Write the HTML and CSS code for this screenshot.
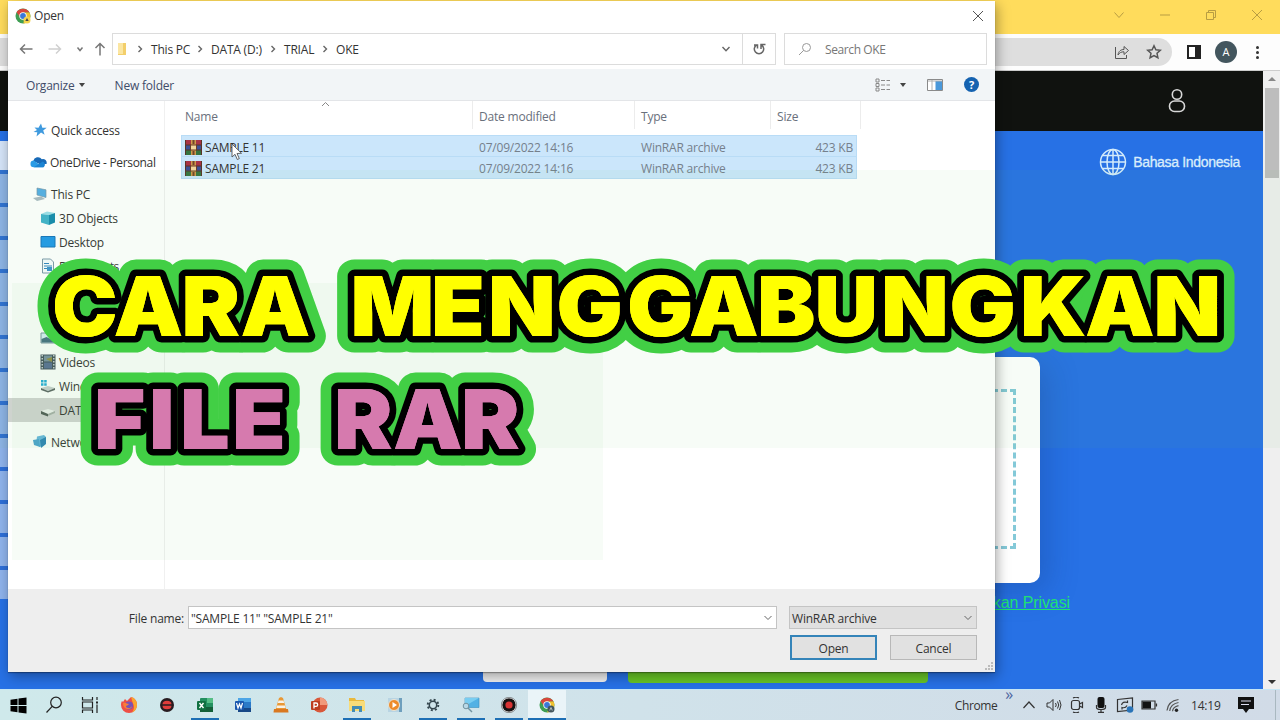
FILE: index.html
```html
<!DOCTYPE html>
<html lang="id">
<head>
  <meta charset="UTF-8">
  <meta name="viewport" content="width=device-width, initial-scale=1.0">
  <title>Cara Menggabungkan File RAR</title>
  <link rel="stylesheet" href="styles.css">
</head>
<body>
  <div class="desktop">
    <!-- browser window -->
    <div class="browser">
      <div class="tabBar">
        <svg width="14" height="14" viewBox="0 0 14 14"><path d="M2.500 4.500l4.500 5 4.500-5"/></svg>
        <svg width="14" height="14" viewBox="0 0 14 14"><path d="M2 7h10"/></svg>
        <svg width="14" height="14" viewBox="0 0 14 14"><path d="M2.500 4.500h7v7h-7zM4.500 4.500v-2h7v7h-2"/></svg>
        <svg width="14" height="14" viewBox="0 0 14 14"><path d="M2 2l10 10M12 2L2 12"/></svg>
      </div>
      <div class="toolBar">
        <div class="urlBar">
          <svg width="16" height="16" viewBox="0 0 16 16"><path d="M1.500 3v11.500h11V11M4 11c.5-4 3-5.500 6-5.500V2.500l4.500 4-4.500 4v-2.700c-3 0-4.500 1-6 3.200z"/></svg>
          <svg width="16" height="16" viewBox="0 0 16 16"><path stroke-width="1.500" d="M8 1.800l1.900 4 4.400.5-3.300 3 .9 4.400L8 11.500l-3.900 2.200.9-4.400-3.300-3 4.400-.5z"/></svg>
        </div>
        <svg class="panelIcon" width="16" height="16" viewBox="0 0 16 16"><path fill="#222" d="M1 1h14v14H1zM3 3v10h6V3z" fill-rule="evenodd"/></svg>
        <div class="avatar">A</div>
        <div class="dots"><i></i><i></i><i></i></div>
      </div>
      <div class="view">
        <div class="page">
          <div class="siteHeader">
            <svg width="20" height="26" viewBox="0 0 20 26"><circle cx="10" cy="6.500" r="4.700"/><rect x="2.500" y="13" width="15" height="10.500" rx="5"/></svg>
          </div>
          <div class="siteBody">
            <div class="language">
              <svg width="28" height="28" viewBox="0 0 28 28"><circle cx="14" cy="14" r="12.500"/><ellipse cx="14" cy="14" rx="6" ry="12.500"/><path d="M14 1.500v25M1.500 14h25M3.500 7.500h21M3.500 20.500h21"/></svg>
              <span>Bahasa Indonesia</span>
            </div>
            <div class="adStrip"></div>
            <div class="uploadCard"><div class="dropZone"></div></div>
            <div class="privacy">Kebijakan Privasi</div>
            <div class="whiteButton"></div>
            <div class="greenButton"></div>
          </div>
        </div>
        <div class="scrollBar">
          <span class="arrowUp"></span>
          <span class="thumb"></span>
          <span class="arrowDown"></span>
        </div>
      </div>
    </div>

    <!-- open file dialog -->
    <div class="dialog">
      <div class="dialogTitle">
        <svg width="16" height="16" viewBox="0 0 16 16"><circle cx="8" cy="8" r="7.500" fill="#3f9e53"/><path fill="#d9463c" d="M1.500 4.300A7.500 7.500 0 0 1 14.500 4.500H8L5 9z"/><path fill="#f2c12e" d="M14.500 4.500A7.500 7.500 0 0 1 8 15.500l3-6-1-5z"/><circle cx="8" cy="8" r="3.700" fill="#fff"/><circle cx="8" cy="8" r="2.900" fill="#3b78d8"/><circle cx="12" cy="12" r="3.500" fill="#f5d44e"/><path d="M12 10l1.700 3h-3.400z" fill="#444"/></svg>
        <span>Open</span>
        <svg class="closeIcon" width="12" height="12" viewBox="0 0 12 12"><path d="M1 1l10 10M11 1L1 11"/></svg>
      </div>
      <div class="addressRow">
        <div class="navButtons">
          <svg width="14" height="14" viewBox="0 0 14 14"><path d="M13.500 7H1.500M6 2.500L1.500 7 6 11.500"/></svg>
          <svg class="faded" width="14" height="14" viewBox="0 0 14 14"><path d="M.5 7h12M8 2.500L12.500 7 8 11.500"/></svg>
          <svg width="8" height="8" viewBox="0 0 8 8"><path d="M1.500 2.500L4 5.500l2.500-3"/></svg>
          <svg width="14" height="14" viewBox="0 0 14 14"><path d="M7 13.500V1.500M2.500 6L7 1.500 11.500 6"/></svg>
        </div>
        <div class="address">
          <svg class="folder" width="11" height="14" viewBox="0 0 11 14"><path fill="#f3cf6b" d="M2 1h7v12H1V9h1z"/><path fill="#fbe6a2" d="M1 1h5v11H1z"/></svg>
          <svg class="chev" width="6" height="8" viewBox="0 0 6 8"><path d="M1.500 1l3 3-3 3"/></svg>
          <span class="crumb crumbPc">This PC</span>
          <svg class="chev" width="6" height="8" viewBox="0 0 6 8"><path d="M1.500 1l3 3-3 3"/></svg>
          <span class="crumb crumbData">DATA (D:)</span>
          <svg class="chev" width="6" height="8" viewBox="0 0 6 8"><path d="M1.500 1l3 3-3 3"/></svg>
          <span class="crumb crumbTrial">TRIAL</span>
          <svg class="chev" width="6" height="8" viewBox="0 0 6 8"><path d="M1.500 1l3 3-3 3"/></svg>
          <span class="crumb">OKE</span>
          <svg class="chev dropChev" width="10" height="8" viewBox="0 0 10 8"><path d="M1.500 2L5 5.800 8.500 2"/></svg>
        </div>
        <div class="refresh">
          <svg width="14" height="14" viewBox="0 0 14 14"><path d="M4.500 3A4.700 4.700 0 1 0 9.500 3M9 7V2.500H13.500M2 3h3.500v3.500"/></svg>
        </div>
        <div class="search">
          <svg width="14" height="14" viewBox="0 0 14 14"><circle cx="8.500" cy="5.500" r="4"/><path d="M5.700 8.300L1 13"/></svg>
          <span>Search OKE</span>
        </div>
      </div>
      <div class="commandBar">
        <span class="organize">Organize</span><b class="caret"></b>
        <span class="newFolder">New folder</span>
        <div class="viewTools">
          <svg width="16" height="14" viewBox="0 0 16 14"><path fill="none" stroke="#888" d="M1 1h3v3H1zM1 5.500h3v3H1zM1 10h3v3H1z"/><path stroke="#888" stroke-dasharray="4 1.500" d="M6 2.500h9M6 7h9M6 11.500h9"/></svg>
          <b class="caret"></b>
          <svg class="preview" width="16" height="12" viewBox="0 0 16 12"><path fill="#fff" stroke="#8a8a8a" d="M.5.500h15v11H.5z"/><path fill="#4a98da" d="M8.500 2H15v9H8.500z"/><path stroke="#b0b0b0" d="M5 1v10M1 2h14"/></svg>
          <div class="help">?</div>
        </div>
      </div>
      <div class="content">
        <div class="sideBar">
          <div class="place">
            <svg width="16" height="16" viewBox="0 0 16 16"><path fill="#3f9ade" d="M9 1.500l1.300 4.200 4.400.1-3.500 2.700 1.400 4.300L9 10.500l-4.500 4 .8-4.200-3.800-.3 3.500-2L2.500 5.500l4 .2z"/></svg>
            <span>Quick access</span>
          </div>
          <div class="place top cloud">
            <svg width="17" height="14" viewBox="0 0 18 14"><path fill="#1769b7" d="M3.500 6A5 5 0 0 1 12.500 4 4 4 0 0 1 17.500 9L10 9z"/><path fill="#2a9be5" d="M4 12.500A3.500 3.500 0 0 1 4 5.500L14 12.500z"/><path fill="#1b83d2" d="M4 12.500l9.500-6A3.500 3.500 0 0 1 14.500 12.500z"/></svg>
            <span>OneDrive - Personal</span>
          </div>
          <div class="place top">
            <svg width="16" height="16" viewBox="0 0 16 16"><path fill="#54aee6" stroke="#7897ab" stroke-width=".7" d="M5 2l9 1.800v7.700L5 9z"/><path fill="#aabac3" d="M1 12l8-1.500 4 2.500-8 2z"/></svg>
            <span>This PC</span>
          </div>
          <div class="place sub">
            <svg width="16" height="16" viewBox="0 0 16 16"><path fill="#9ddfeb" d="M1 4l6-2.500L15 3 9 5z"/><path fill="#41b2cc" d="M1 4l8 1v10l-8-2.500z"/><path fill="#168aae" d="M9 5l6-2v9.500L9 15z"/></svg>
            <span>3D Objects</span>
          </div>
          <div class="place sub">
            <svg width="16" height="16" viewBox="0 0 16 16"><path fill="#2199e8" stroke="#1674bd" d="M1 2.500h14v10.500H1z"/></svg>
            <span>Desktop</span>
          </div>
          <div class="place sub">
            <svg width="16" height="16" viewBox="0 0 16 16"><path fill="#f7fbfd" stroke="#7d99aa" d="M2.500 1h8l3 3v11h-11z"/><path stroke="#3385bf" d="M4 5.500h5M4 8h8M4 10.500h3"/><path fill="#3e93cc" d="M7 9h5v4H7z"/></svg>
            <span class="docs">Documents</span>
          </div>
          <div class="place sub"></div>
          <div class="place sub"></div>
          <div class="place sub">
            <svg width="16" height="16" viewBox="0 0 16 16"><path fill="#d9edf7" stroke="#7d95a0" d="M1 3h14v10H1z"/><path fill="#446f80" d="M1.500 9l5-2 8 4v1.500h-13z"/></svg>
          </div>
          <div class="place sub">
            <svg width="16" height="16" viewBox="0 0 16 16"><path fill="#43515c" d="M.5.500h15v15H.5z"/><path fill="#7990a0" d="M4 1.500h8v6H4z"/><path fill="#576f95" d="M4 8.500h8v6H4z"/><path fill="#938e48" d="M6 5l6-2v5z"/><path stroke="#dce3e6" stroke-width="1.300" stroke-dasharray="1.500 1.500" d="M2.200 1v14M13.800 1v14"/></svg>
            <span>Videos</span>
          </div>
          <div class="place sub">
            <svg width="16" height="16" viewBox="0 0 16 16"><path fill="#c9d0d0" d="M1 10l7-2 7 2-7 3z"/><path fill="#5c6464" d="M1 10l7 3 7-3v2l-7 2.500L1 12z"/><path fill="#22acd8" d="M1 2h2.500v2.500H1zM4.200 2h2.500v2.500H4.200zM1 5.200h2.500v2.500H1zM4.200 5.200h2.500v2.500H4.200z"/></svg>
            <span>Windows</span>
          </div>
          <div class="place sub selected">
            <svg width="16" height="16" viewBox="0 0 16 16"><path fill="#eef0ee" d="M1 9l7-2 7 2-7 3z"/><path fill="#515b56" d="M1 9l7 3v2.500L1 12z"/><path fill="#a8afaa" d="M8 12l7-3v2l-7 3z"/></svg>
            <span>DATA (D:)</span>
          </div>
          <div class="place top">
            <svg width="16" height="16" viewBox="0 0 16 16"><path fill="#67b7df" d="M5 2.500l7-1.500 2 2-1 7-5 3-4-3z"/><path fill="#2c83b6" d="M8 6l6-3v7l-5 4z"/><path fill="#4ca3d1" d="M1 6l6-1 1 8-6-2z"/></svg>
            <span>Network</span>
          </div>
        </div>
        <div class="files">
          <div class="fileHead">
            <span>Name</span><span>Date modified</span><span>Type</span><span>Size</span>
            <svg class="sortMark" width="9" height="6" viewBox="0 0 9 6"><path d="M1 5l3.500-3.500L8 5"/></svg>
          </div>
          <div class="fileRow">
            <span class="fileName"><svg width="17" height="15" viewBox="0 0 17 15"><path fill="#a83245" d="M0 0h17v5H0z"/><path fill="#3d4f95" d="M0 5h17v5H0z"/><path fill="#357440" d="M0 10h17v5H0z"/><path fill="#5b3326" d="M0 4.500h17v1H0zM0 9.500h17v1H0zM0 0h1v15H0zM16 0h1v15h-1z"/><path fill="#d19a4a" d="M6 0h5v15H6z"/><path fill="#70452c" d="M7.500 0h2v4h-2zM7.500 11h2v4h-2z"/><path fill="#f1d59b" stroke="#6b3c28" d="M5.500 5h6v5h-6z"/></svg>SAMPLE 11</span>
            <span>07/09/2022 14:16</span><span>WinRAR archive</span><span class="size">423 KB</span>
          </div>
          <div class="fileRow">
            <span class="fileName"><svg width="17" height="15" viewBox="0 0 17 15"><path fill="#a83245" d="M0 0h17v5H0z"/><path fill="#3d4f95" d="M0 5h17v5H0z"/><path fill="#357440" d="M0 10h17v5H0z"/><path fill="#5b3326" d="M0 4.500h17v1H0zM0 9.500h17v1H0zM0 0h1v15H0zM16 0h1v15h-1z"/><path fill="#d19a4a" d="M6 0h5v15H6z"/><path fill="#70452c" d="M7.500 0h2v4h-2zM7.500 11h2v4h-2z"/><path fill="#f1d59b" stroke="#6b3c28" d="M5.500 5h6v5h-6z"/></svg>SAMPLE 21</span>
            <span>07/09/2022 14:16</span><span>WinRAR archive</span><span class="size">423 KB</span>
          </div>
        </div>
      </div>
      <div class="footer">
        <div class="nameRow">
          <label>File name:</label>
          <div class="nameInput"><span>"SAMPLE 11" "SAMPLE 21"</span><svg width="10" height="8" viewBox="0 0 10 8"><path d="M1.500 2L5 5.500 8.500 2"/></svg></div>
          <div class="typeSelect"><span>WinRAR archive</span><svg width="10" height="8" viewBox="0 0 10 8"><path d="M1.500 2L5 5.500 8.500 2"/></svg></div>
        </div>
        <div class="buttons">
          <div class="button primary">Open</div>
          <div class="button">Cancel</div>
        </div>
        <svg class="grip" width="8" height="8" viewBox="0 0 8 8"><path fill="#bbb" d="M6 0h2v2H6zM3 3h2v2H3zM6 3h2v2H6zM0 6h2v2H0zM3 6h2v2H3zM6 6h2v2H6z"/></svg>
      </div>
    </div>

    <div class="tint tintWide"></div>
    <div class="tint tintLeft"></div>

    <svg class="cursor" width="12" height="18" viewBox="0 0 12 18"><path fill="#fff" stroke="#555" stroke-width=".9" d="M1 1v13l3-2.700 2.300 5.200 2-.9L6 10.500l4.500-.2z"/></svg>

    <!-- taskbar -->
    <div class="taskBar">
      <div class="sys"><svg width="17" height="17" viewBox="0 0 17 17"><path d="M.5 2.800l7-1v6.200h-7zM8.500 1.600L16.500.500v7.500h-8zM.5 9h7v6.200l-7-1zM8.500 9h8v7.500l-8-1.100z"/></svg></div>
      <div class="sys"><svg width="18" height="18" viewBox="0 0 18 18"><g fill="none" stroke="#222" stroke-width="1.200"><circle cx="11" cy="6.500" r="5.300"/><path d="M7.200 10.300L1.500 16.500"/></g></svg></div>
      <div class="sys"><svg width="18" height="18" viewBox="0 0 18 18"><g fill="none" stroke="#222" stroke-width="1.200"><path d="M1.500 1v3h10V1M1.500 17v-3h10v3M1.500 6h10v6h-10zM16 1v3M16 8.500V17"/><path stroke-width="2" d="M15 6.500h2"/></g></svg></div>
      <div class="app"><svg width="18" height="18" viewBox="0 0 18 18"><path fill="#ee4f45" d="M2 5l1 1 2-3 2 2 4-4c4 1 6 4 6 8a8 8 0 0 1-16 0c0-2 .3-3 1-4z"/><path fill="#f8a52f" d="M11 1c4 1 6 4 6 8a8 8 0 0 1-5 7.400c3-4 2-7 1-9z"/><circle cx="9" cy="9.500" r="4" fill="#7552b8"/><path fill="#f77c39" d="M3 7c3-1 4 1 6 1-1 2-3 1-3 3 2 2 5 1 6-1 0 4-9 5-9-3z"/></svg></div>
      <div class="app"><svg width="16" height="16" viewBox="0 0 16 16"><circle cx="8" cy="8" r="7" fill="#281c20"/><path fill="#e03d3b" d="M3.500 7.300a4.500 3.500 0 0 1 9 0zM3.500 8.700h9a4.500 3.500 0 0 1-9 0z"/></svg></div>
      <div class="app open"><svg width="18" height="16" viewBox="0 0 18 16"><rect x="4" y="1" width="13" height="14" rx="1" fill="#249060"/><path fill="#56be85" d="M11 1h6v5h-6z"/><path fill="#135f38" d="M4 10h13v5H4z"/><rect x="1" y="4" width="9" height="9" rx="1" fill="#107040"/><path stroke="#fff" stroke-width="1.400" d="M3.500 6l4 5M7.500 6l-4 5"/></svg></div>
      <div class="app"><svg width="18" height="16" viewBox="0 0 18 16"><rect x="4" y="1" width="13" height="14" rx="1" fill="#2b79c7"/><path fill="#4da5e6" d="M4 1h13v4H4z"/><path fill="#174887" d="M4 11h13v4H4z"/><rect x="1" y="4" width="9" height="9" rx="1" fill="#1957ae"/><path fill="none" stroke="#fff" stroke-width="1.200" d="M2.500 6L4 11l1.500-4L7 11l1.500-5"/></svg></div>
      <div class="app"><svg width="16" height="18" viewBox="0 0 16 18"><path fill="#e99835" d="M8 1l2 1 3.500 12h-11L6 2z"/><path fill="#f7f1e6" d="M5.500 4.500h5l.7 2.500H4.800zM4 9.500h8l.7 2.500H3.300z"/><path fill="#d97922" d="M1 13h14l.5 3.500H.5z"/></svg></div>
      <div class="app"><svg width="18" height="16" viewBox="0 0 18 16"><circle cx="10" cy="8" r="7.500" fill="#d9583a"/><path fill="#f19a7b" d="M10 .5A7.500 7.500 0 0 1 17.500 8H10z"/><rect x="1" y="4" width="9" height="9" rx="1" fill="#bd3d21"/><path fill="none" stroke="#fff" stroke-width="1.300" d="M4 11.500V6h2a1.700 1.700 0 0 1 0 3.400H4"/></svg></div>
      <div class="app open"><svg width="18" height="16" viewBox="0 0 18 16"><path fill="#e9b93d" d="M1 1h6l1 2h8v4H1z"/><path fill="#f8dc79" d="M1 4h16v10H1z"/><path fill="#438cb5" d="M4 15V9h10v6h-3v-3H7v3z"/></svg></div>
      <div class="app"><svg width="18" height="16" viewBox="0 0 18 16"><path fill="#6e9fbd" d="M4 1h12v14H4z"/><path fill="#b8d4e3" d="M2 1h11v14H2z"/><circle cx="8" cy="8" r="5.500" fill="#ed8b2b" stroke="#e8e6da"/><path fill="#fff" d="M6.500 5v6l4.500-3z"/></svg></div>
      <div class="app open"><svg width="14" height="14" viewBox="0 0 14 14"><circle cx="7" cy="7" r="3.700" fill="none" stroke="#34454d" stroke-width="1.500"/><circle cx="7" cy="7" r="5.300" fill="none" stroke="#34454d" stroke-width="1.900" stroke-dasharray="2 2.163"/></svg></div>
      <div class="app open"><svg width="18" height="16" viewBox="0 0 18 16"><path fill="#52b1e4" stroke="#398ebe" stroke-width=".6" d="M3 1h14v9.500H3z"/><path fill="#79cdf1" d="M3 1h14L3 9z"/><circle cx="4" cy="9" r="2.800" fill="#b9d8e7" stroke="#71929f"/><path stroke="#71929f" stroke-width="1.500" d="M6 11l4 4"/></svg></div>
      <div class="app open"><svg width="16" height="16" viewBox="0 0 16 16"><circle cx="8" cy="8" r="7.200" fill="#171313" stroke="#f5f5f5"/><circle cx="8" cy="8" r="7.700" fill="none" stroke="#333" stroke-width=".5"/><circle cx="8" cy="8" r="3.600" fill="#d93434"/></svg></div>
      <div class="app open active"><svg width="16" height="16" viewBox="0 0 16 16"><circle cx="8" cy="8" r="7.500" fill="#3f9e53"/><path fill="#d9463c" d="M1.500 4.300A7.500 7.500 0 0 1 14.500 4.500H8L5 9z"/><path fill="#f2c12e" d="M14.500 4.500A7.500 7.500 0 0 1 8 15.500l3-6-1-5z"/><circle cx="8" cy="8" r="3.700" fill="#fff"/><circle cx="8" cy="8" r="2.900" fill="#3b78d8"/><circle cx="12" cy="12" r="3.500" fill="#43555c"/><path d="M10.700 13.500l1.300-3 1.300 3" fill="none" stroke="#dce6e8" stroke-width=".7"/></svg></div>
      <div class="tray">
        <span class="trayLabel">Chrome</span><span class="more">»</span>
        <svg width="24" height="16" viewBox="0 0 24 16"><path d="M6.500 11L12 5l5.500 6"/></svg>
        <svg width="24" height="16" viewBox="0 0 24 16"><path d="M6 6h2.500L12 2.500v11L8.500 10H6zM14.500 6q1.500 2 0 4M16.500 4.500q2.500 3.500 0 7M18.500 3q3 5 0 10" stroke-width="1"/></svg>
        <svg width="24" height="16" viewBox="0 0 24 16"><rect x="6.500" y="3.500" width="8" height="9" rx="2"/><path d="M14.500 7l3-1.500v5l-3-1.500M8 1q3-1.500 6 0M8 15q3 1.500 6 0"/></svg>
        <svg width="24" height="16" viewBox="0 0 24 16"><rect x="8.500" y="0" width="7" height="11" rx="2" fill="#111" stroke="none"/><path d="M7.500 8v2.500q0 2 4.500 2t4.500-2V8M12 12v3M9 15.300h6"/></svg>
        <svg width="24" height="16" viewBox="0 0 24 16"><path d="M4.500 2.500l15-1.500v12l-15 1.500z"/><path d="M8.500 8q1-4 6-2.500V3.500M14 8.500q-1.500 3-5 2v2"/><circle cx="17" cy="12.500" r="3.300" fill="#2a74b8" stroke="none"/></svg>
        <svg width="24" height="16" viewBox="0 0 24 16"><path d="M5 4h13v8H5zM19.500 6.500v3"/><path fill="#111" stroke="none" d="M5.500 4.500h8.500v7H5.500z"/></svg>
        <svg width="24" height="16" viewBox="0 0 24 16"><path stroke="#555" d="M6 13.500Q7 4 17.500 2.500M8.700 14Q9.500 7 17.500 5.500M11.500 14.300Q12 10 17.500 8.700"/><circle cx="15.500" cy="13.200" r="1.700" fill="#222" stroke="none"/></svg>
        <span class="clock">14:19</span>
        <svg class="note" width="18" height="18" viewBox="0 0 18 18"><path fill="#111" stroke="none" d="M1 1h16v12h-5l-3 4-3-4H1z"/><path stroke="#dde" stroke-width="1" d="M4 5h10M4 8.500h8"/></svg>
        <i class="peek"></i>
      </div>
    </div>

    <!-- big caption over everything -->
    <svg class="caption" width="1280" height="220" viewBox="0 250 1280 220">
      <defs>
        <g id="words" transform="scale(1.06 1)">
          <text class="lineOne" y="336" x="49.1 107.1 171.2 226.9">CARA</text>
          <text class="lineOne" y="336" x="330.7 406.6 460.4 525 591.5 650 714.2 768.4 831.1 895.8 962.3 1023.6 1088.2">MENGGABUNGKAN</text>
          <text class="lineTwo" y="449" x="88.7 140.6 169.8 218.9">FILE</text>
          <text class="lineTwo" y="449" x="315.1 370.8 434.9">RAR</text>
        </g>
      </defs>
      <use href="#words" class="outerEdge"/>
      <use href="#words" class="innerEdge"/>
      <use href="#words" class="face"/>
    </svg>
  </div>
</body>
</html>
```

FILE: styles.css
```css
body, html {
  margin: 0;
  height: 100%;
  overflow: hidden;
}
.desktop {
  position: relative;
  width: 1280px;
  height: 720px;
  overflow: hidden;
  font-family: 'Open Sans', 'Noto Sans', sans-serif;
  font-size: 12px;
  letter-spacing: -0.2px;
  color: #333;
}
svg {
  flex-shrink: 0;
}

/* browser */
.browser {
  height: 689px;
  display: flex;
  flex-direction: column;
}
.tabBar {
  height: 34px;
  flex-shrink: 0;
  box-sizing: border-box;
  background-color: #ffdc5c;
  display: flex;
  justify-content: flex-end;
  gap: 32px;
  padding: 8px 16px 0 0;
}
.tabBar path {
  fill: none;
  stroke: #b89d42;
}
.toolBar {
  height: 37px;
  flex-shrink: 0;
  box-sizing: border-box;
  border-bottom: 1px solid #ccc;
  background-color: #fdfdfd;
  display: flex;
  align-items: center;
}
.urlBar {
  width: 1172px;
  height: 28px;
  box-sizing: border-box;
  padding-right: 10px;
  border-radius: 0 14px 14px 0;
  background-color: #dedede;
  display: flex;
  align-items: center;
  justify-content: flex-end;
  gap: 16px;
}
.urlBar path {
  fill: none;
  stroke: #555;
}
.panelIcon {
  margin-left: 14px;
}
.avatar {
  width: 22px;
  height: 22px;
  margin-left: 13px;
  border-radius: 50%;
  background-color: #43565e;
  color: #fff;
  font-size: 11px;
  line-height: 22px;
  text-align: center;
}
.dots {
  margin-left: 19px;
  display: flex;
  flex-direction: column;
  gap: 2px;
}
.dots i {
  width: 3px;
  height: 3px;
  border-radius: 50%;
  background-color: #333;
}
.view {
  flex: 1;
  display: flex;
}
.page {
  width: 1263px;
}
.siteHeader {
  height: 60px;
  box-sizing: border-box;
  padding: 17px 76px 0 0;
  text-align: right;
  background-color: #10120f;
}
.siteHeader svg {
  fill: none;
  stroke: #d8d8d8;
  stroke-width: 1.6;
}
.siteBody {
  position: relative;
  height: 558px;
  background-color: #2771e5;
}
.language {
  display: flex;
  align-items: center;
  justify-content: flex-end;
  gap: 6px;
  padding: 17px 23px 0 0;
  color: #d9ecfb;
  font-family: 'Liberation Sans', sans-serif;
  font-size: 14px;
  letter-spacing: -0.33px;
  -webkit-text-stroke: 0.3px #d9ecfb;
}
.language svg {
  fill: none;
  stroke: #d3ebfb;
  stroke-width: 1.5;
}
.adStrip {
  position: absolute;
  left: 0;
  top: 10px;
  width: 8px;
  height: 458px;
  background: linear-gradient(#d5e4f8 29px, transparent 29px), repeating-linear-gradient(#8fb3ec 0, #8fb3ec 29px, #2e6fd8 29px, #2e6fd8 33px);
}
.uploadCard {
  position: absolute;
  left: 400px;
  top: 226px;
  width: 640px;
  height: 226px;
  box-sizing: border-box;
  padding: 32px 24px;
  border-radius: 10px;
  background-color: #fff;
  box-shadow: 8px 8px 30px rgba(20, 60, 130, 0.3);
}
.dropZone {
  height: 160px;
  box-sizing: border-box;
  border: 3px dashed #84c9d8;
}
.privacy {
  position: absolute;
  right: 193px;
  top: 463px;
  color: #1fe073;
  font-family: 'Liberation Sans', sans-serif;
  font-size: 16px;
  letter-spacing: -0.1px;
  text-decoration: underline;
}
.whiteButton, .greenButton {
  position: absolute;
  bottom: 7px;
  height: 40px;
  border-radius: 4px;
}
.whiteButton {
  left: 483px;
  width: 124px;
  background-color: #f0f0f0;
}
.greenButton {
  left: 628px;
  width: 300px;
  bottom: 6px;
  background-color: #68c526;
}
.scrollBar {
  width: 17px;
  box-sizing: border-box;
  background-color: #efefef;
  display: flex;
  flex-direction: column;
  align-items: center;
}
.arrowUp, .arrowDown {
  border: 4px solid transparent;
}
.arrowUp {
  margin-top: 2px;
  border-bottom-color: #888;
}
.thumb {
  width: 14px;
  height: 90px;
  margin-top: 7px;
  background-color: #bdbdbd;
}
.arrowDown {
  margin-top: auto;
  margin-bottom: 1px;
  border-top-color: #333;
}

/* dialog */
.dialog {
  position: absolute;
  left: 8px;
  top: 1px;
  width: 987px;
  height: 671px;
  background-color: #fff;
  display: flex;
  flex-direction: column;
  box-shadow: 0 1px 1px rgba(0, 0, 0, 0.3), 2px 4px 12px rgba(0, 0, 0, 0.35);
}
.dialogTitle {
  height: 32px;
  box-sizing: border-box;
  padding: 0 11px 3px 7px;
  display: flex;
  align-items: center;
  gap: 3px;
}
.closeIcon {
  margin-left: auto;
  fill: none;
  stroke: #555;
}
.addressRow {
  height: 32px;
  display: flex;
  padding-right: 8px;
}
.navButtons {
  width: 104px;
  box-sizing: border-box;
  padding-left: 11px;
  display: flex;
  align-items: center;
  gap: 15px;
  fill: none;
  stroke: #777;
  stroke-width: 1.5;
}
.navButtons .faded {
  stroke: #d0d0d0;
}
.navButtons svg:nth-child(3) {
  margin-left: -1px;
}
.navButtons svg:nth-child(4) {
  margin-left: -6px;
}
.address {
  width: 631px;
  box-sizing: border-box;
  padding-left: 4px;
  border: 1px solid #dcdcdc;
  display: flex;
  align-items: center;
}
.chev {
  fill: none;
  stroke: #666;
  stroke-width: 1.4;
}
.folder {
  margin-right: 9px;
}
.crumb {
  margin: 0 8px 0 8px;
  white-space: nowrap;
}
.crumbPc {
  width: 38px;
}
.crumbData {
  width: 51px;
}
.crumbTrial {
  width: 30px;
}
.dropChev {
  margin-left: auto;
  margin-right: 11px;
}
.refresh {
  width: 33px;
  box-sizing: border-box;
  border: 1px solid #dcdcdc;
  border-left: 0;
  display: flex;
  align-items: center;
  justify-content: center;
  fill: none;
  stroke: #666;
  stroke-width: 1.5;
}
.search {
  width: 203px;
  margin-left: 8px;
  box-sizing: border-box;
  padding-left: 13px;
  border: 1px solid #dcdcdc;
  display: flex;
  align-items: center;
  gap: 13px;
  color: #777;
  letter-spacing: -0.4px;
}
.search svg {
  fill: none;
  stroke: #999;
}
.commandBar {
  height: 32px;
  margin-top: 4px;
  box-sizing: border-box;
  border-bottom: 1px solid #e3e5e8;
  padding: 0 16px 0 18px;
  background-color: #f2f5f7;
  color: #3f4c69;
  display: flex;
  align-items: center;
}
.commandBar > span {
  padding-top: 2px;
}
.caret {
  border: 3px solid transparent;
  border-top: 4px solid #444;
  border-bottom: 0;
  margin-left: 4px;
}
.newFolder {
  margin-left: 30px;
}
.viewTools {
  margin-left: auto;
  display: flex;
  align-items: center;
}
.viewTools .caret {
  margin-left: 9px;
}
.preview {
  margin-left: 21px;
}
.help {
  width: 15px;
  height: 15px;
  margin-left: 21px;
  border-radius: 50%;
  background-color: #1562b0;
  color: #fff;
  font-size: 11px;
  font-weight: bold;
  line-height: 15px;
  text-align: center;
}
.content {
  height: 488px;
  display: flex;
}
.sideBar {
  width: 157px;
  box-sizing: border-box;
  border-right: 1px solid #f0f0f0;
  padding-top: 17px;
}
.place {
  height: 24px;
  padding-left: 24px;
  display: flex;
  align-items: center;
  gap: 3px;
  white-space: nowrap;
}
.place.top {
  margin-top: 8px;
}
.place.sub {
  padding-left: 32px;
}
.place.cloud {
  padding-left: 22px;
  letter-spacing: -0.32px;
}
.place.selected {
  background-color: #d4d4d4;
}
.place .docs {
  letter-spacing: -0.5px;
}
.files {
  flex: 1;
  padding-left: 16px;
}
.fileHead {
  position: relative;
  height: 28px;
  width: 680px;
  display: grid;
  grid-template-columns: 292px 162px 136px 90px;
  line-height: 31px;
  color: #69707c;
}
.fileHead span {
  height: 28px;
  padding-left: 6px;
  border-right: 1px solid #ececec;
}
.fileHead span:first-child {
  padding-left: 4px;
}
.sortMark {
  position: absolute;
  left: 140px;
  top: 0;
  fill: none;
  stroke: #888;
}
.fileRow {
  width: 676px;
  height: 22px;
  box-sizing: border-box;
  border: 1px solid #b9dcf6;
  background-color: #cbe6fb;
  display: grid;
  grid-template-columns: 297px 162px 135px 1fr;
  align-items: center;
  line-height: 20px;
  padding-top: 2px;
  color: #75808c;
}
.fileHead + .fileRow {
  margin-top: 6px;
}
.fileRow + .fileRow {
  border-top: 0;
}
.fileName {
  display: flex;
  align-items: center;
  gap: 3px;
  padding-left: 3px;
  color: #333;
}
.fileName svg {
  margin-top: -2px;
}
.size {
  text-align: right;
  padding-right: 3px;
}
.footer {
  position: relative;
  flex: 1;
  background-color: #eee;
  padding-top: 17px;
}
.nameRow {
  display: flex;
  align-items: center;
}
.nameRow label {
  width: 176px;
  margin-right: 4px;
  padding-top: 2px;
  text-align: right;
}
.nameInput, .typeSelect {
  height: 23px;
  box-sizing: border-box;
  border: 1px solid #c4c4c4;
  display: flex;
  align-items: center;
  justify-content: space-between;
  padding: 0 3px 0 2px;
}
.nameRow span {
  padding-top: 2px;
}
.nameRow svg {
  fill: none;
  stroke: #666;
}
.nameInput {
  width: 589px;
  background-color: #fff;
}
.typeSelect {
  width: 188px;
  margin-left: 12px;
  background-color: #e0e0e0;
}
.buttons {
  display: flex;
  gap: 13px;
  margin: 6px 0 0 782px;
}
.button {
  width: 87px;
  height: 25px;
  box-sizing: border-box;
  border: 1px solid #b8b8b8;
  background-color: #e1e1e1;
  line-height: 26px;
  text-align: center;
}
.button.primary {
  border: 2px solid #3484b9;
  line-height: 24px;
}
.grip {
  position: absolute;
  right: 2px;
  bottom: 2px;
}

/* faint green haze across the screen */
.tint {
  position: absolute;
  left: 0;
  background-color: rgba(110, 195, 110, 0.055);
}
.tintWide {
  top: 170px;
  width: 1280px;
  height: 278px;
}
.tintLeft {
  left: 12px;
  top: 283px;
  width: 591px;
  height: 277px;
}
.cursor {
  position: absolute;
  left: 231px;
  top: 143px;
}

/* taskbar */
.taskBar {
  height: 31px;
  box-sizing: border-box;
  border-top: 1px solid #c5e6f5;
  background: linear-gradient(90deg, #cfe9eb, #d0e2ea 50%, #d1dbe7);
  position: relative;
  display: flex;
}
.sys, .app {
  display: flex;
  align-items: center;
  justify-content: center;
}
.sys {
  width: 36px;
}
.app {
  width: 38px;
  position: relative;
}
.sys + .app {
  margin-left: 2px;
}
.app.open::after {
  content: '';
  position: absolute;
  bottom: 0;
  left: 5px;
  width: 28px;
  height: 2px;
  background-color: #1d6fb5;
}
.app.active {
  background-color: #eaf4f8;
}
.app.active::after {
  left: 0;
  width: 38px;
}
.tray {
  margin-left: auto;
  display: flex;
  align-items: center;
  fill: none;
  stroke: #333;
  stroke-width: 1.2;
}
.trayLabel {
  letter-spacing: -0.4px;
}
.more {
  margin: -22px 4px 0 8px;
  font-size: 16px;
  color: #4d65a0;
}
.clock {
  margin-left: 6px;
  width: 30px;
}
.note {
  margin-left: 16px;
}
.peek {
  width: 4px;
  height: 30px;
  margin-left: 20px;
  border-left: 1px solid #a9b8c0;
}

/* caption */
.caption {
  position: absolute;
  left: 0;
  top: 250px;
  font-family: Inter, sans-serif;
  font-weight: 900;
  font-size: 83px;
  letter-spacing: 0;
}
.lineOne {
  fill: #ff0;
}
.lineTwo {
  fill: #d67aae;
}
.outerEdge {
  stroke: #42cf45;
  stroke-width: 33px;
  stroke-linejoin: round;
}
.innerEdge {
  stroke: #000;
  stroke-width: 13px;
  stroke-linejoin: round;
}
.face {
  stroke-width: 1.5px;
}
.face, .lineOne, .lineTwo {
  paint-order: stroke;
}
```
